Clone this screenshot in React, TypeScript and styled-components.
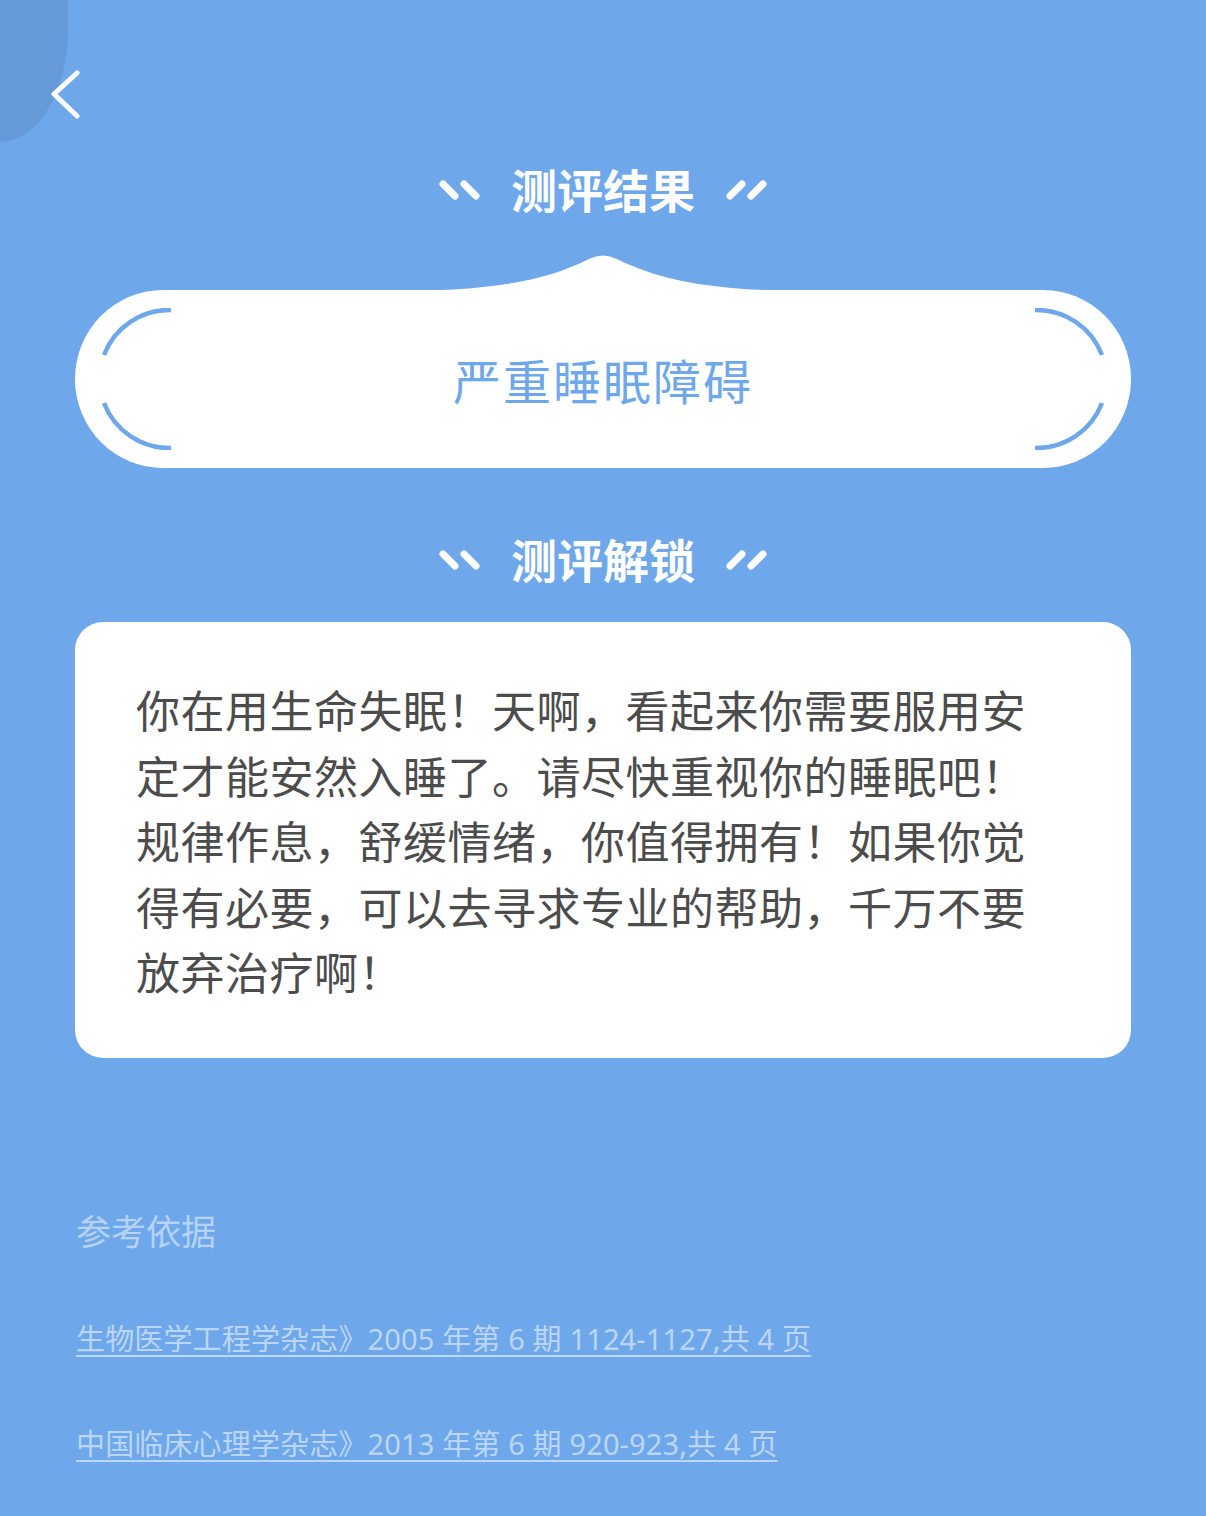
import React from "react";
import styled, { createGlobalStyle } from "styled-components";

const BLUE = "#6ea8ea";

const GlobalStyle = createGlobalStyle`
    html, body {
        margin: 0;
        padding: 0;
        background: ${BLUE};
    }
    body {
        font-family: "Noto Sans", "Noto Sans CJK SC", sans-serif;
    }
`;

const message =
    "你在用生命失眠！天啊，看起来你需要服用安定才能安然入睡了。请尽快重视你的睡眠吧！规律作息，舒缓情绪，你值得拥有！如果你觉得有必要，可以去寻求专业的帮助，千万不要放弃治疗啊！";

const references = [
    "生物医学工程学杂志》2005 年第 6 期 1124-1127,共 4 页",
    "中国临床心理学杂志》2013 年第 6 期 920-923,共 4 页",
];

const Slashes: React.FC<{ flip?: boolean }> = ({ flip }) => (
    <SlashIcon viewBox="0 0 44 22" $flip={flip}>
        <line x1="6" y1="5" x2="18" y2="17" />
        <line x1="27" y1="5" x2="39" y2="17" />
    </SlashIcon>
);

const Bracket: React.FC<{ flip?: boolean }> = ({ flip }) => (
    <BracketIcon viewBox="0 0 72 142" $flip={flip}>
        <path d="M70 2 A70 70 0 0 0 3 47" />
        <path d="M3 95 A70 70 0 0 0 70 140" />
    </BracketIcon>
);

const App: React.FC = () => {
    return (
        <Page>
            <GlobalStyle />
            <CornerBlob />
            <TopBar>
                <BackButton aria-label="返回">
                    <svg width="34" height="50" viewBox="0 0 34 50">
                        <polyline points="29,3 6,24 29,46" />
                    </svg>
                </BackButton>
            </TopBar>

            <SectionTitle $top={40}>
                <Slashes />
                <span>测评结果</span>
                <Slashes flip />
            </SectionTitle>

            <ResultPill>
                <Peak viewBox="0 0 420 38" preserveAspectRatio="none">
                    <path d="M0 38 C95 38 150 29 196 6 Q210 -1 224 6 C270 29 325 38 420 38 Z" />
                </Peak>
                <Bracket />
                <ResultText>严重睡眠障碍</ResultText>
                <Bracket flip />
            </ResultPill>

            <SectionTitle $top={62}>
                <Slashes />
                <span>测评解锁</span>
                <Slashes flip />
            </SectionTitle>

            <MessageCard>
                <MessageText>{message}</MessageText>
            </MessageCard>

            <References>
                <RefHeading>参考依据</RefHeading>
                {references.map((ref) => (
                    <RefLink key={ref} href="#">
                        {ref}
                    </RefLink>
                ))}
            </References>
        </Page>
    );
};

export default App;

// Styled Components
const Page = styled.div`
    position: relative;
    min-height: 1516px;
    background: ${BLUE};
    overflow: hidden;
`;

const CornerBlob = styled.div`
    position: absolute;
    top: 0;
    left: 0;
    width: 68px;
    height: 142px;
    background: #6599d8;
    border-bottom-right-radius: 68px 112px;
`;

const TopBar = styled.div`
    position: relative;
    height: 50px;
    padding: 70px 0 0 48px;
`;

const BackButton = styled.button`
    display: block;
    padding: 0;
    border: none;
    background: transparent;
    cursor: pointer;

    svg {
        display: block;
        fill: none;
        stroke: #fff;
        stroke-width: 5;
        stroke-linecap: round;
        stroke-linejoin: round;
    }
`;

const SectionTitle = styled.h2<{ $top: number }>`
    margin: ${({ $top }) => $top}px 0 0;
    height: 60px;
    display: flex;
    align-items: center;
    justify-content: center;
    gap: 30px;
    color: #fff;
    font-family: "Noto Sans CJK SC", sans-serif;
    font-size: 46px;
    font-weight: 700;
    line-height: 60px;

    span {
        position: relative;
        top: -2px;
    }
`;

const SlashIcon = styled.svg<{ $flip?: boolean }>`
    width: 44px;
    height: 22px;
    transform: ${({ $flip }) => ($flip ? "scaleX(-1)" : "none")};

    line {
        stroke: #fff;
        stroke-width: 7;
        stroke-linecap: round;
    }
`;

const ResultPill = styled.div`
    position: relative;
    margin: 70px 75px 0;
    height: 178px;
    padding: 0 26px;
    display: flex;
    align-items: center;
    justify-content: space-between;
    background: #fff;
    border-radius: 88px / 89px;
`;

const Peak = styled.svg`
    position: absolute;
    left: 50%;
    bottom: calc(100% - 1px);
    width: 420px;
    height: 38px;
    transform: translateX(-50%);
    fill: #fff;
`;

const BracketIcon = styled.svg<{ $flip?: boolean }>`
    width: 72px;
    height: 142px;
    flex-shrink: 0;
    transform: ${({ $flip }) => ($flip ? "scaleX(-1)" : "none")};

    path {
        fill: none;
        stroke: ${BLUE};
        stroke-width: 4.5;
    }
`;

const ResultText = styled.div`
    color: ${BLUE};
    font-family: "Noto Sans CJK SC", sans-serif;
    font-size: 48px;
    font-weight: 400;
    letter-spacing: 2px;
    line-height: 60px;
`;

const MessageCard = styled.div`
    margin: 32px 75px 0;
    padding: 55px 0 53px 61px;
    background: #fff;
    border-radius: 28px;
`;

const MessageText = styled.p`
    margin: 0;
    max-width: 900px;
    color: #4c4c4c;
    font-family: "Noto Sans CJK SC", sans-serif;
    font-size: 44px;
    letter-spacing: 0.5px;
    line-height: 65.5px;
`;

const References = styled.div`
    margin-top: 148px;
    padding-left: 76px;
    display: flex;
    flex-direction: column;
    align-items: flex-start;
`;

const RefHeading = styled.div`
    color: rgba(255, 255, 255, 0.5);
    font-family: "Noto Sans CJK SC", sans-serif;
    font-size: 35px;
    line-height: 48px;
`;

const RefLink = styled.a`
    margin-top: 52px;
    color: rgba(255, 255, 255, 0.55);
    font-size: 29px;
    letter-spacing: 0.15px;
    line-height: 65px;
    text-decoration: underline;
    text-decoration-thickness: 2px;
    text-underline-offset: 5px;

    & + & {
        margin-top: 40px;
    }
`;
